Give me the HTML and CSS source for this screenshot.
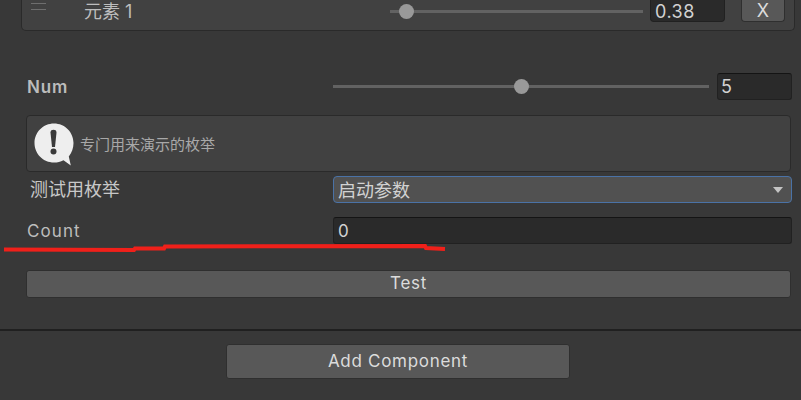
FILE: index.html
```html
<!DOCTYPE html>
<html lang="en">
<head>
    <meta charset="UTF-8">
    <title>Inspector</title>
    <link rel="stylesheet" href="styles.css">
</head>
<body>
<div class="inspector">
    <div class="list-card">
        <div class="handle"></div>
        <div class="item-name">元素 1</div>
        <div class="slider item-slider"><span class="thumb" style="left:16px"></span></div>
        <div class="field item-value">0.38</div>
        <div class="btn remove">X</div>
    </div>

    <div class="row num-row">
        <div class="label bold">Num</div>
        <div class="value-cell">
            <div class="slider"><span class="thumb" style="left:188px"></span></div>
            <div class="field num-value">5</div>
        </div>
    </div>

    <div class="helpbox">
        <svg class="help-icon" width="40" height="44" viewBox="0 0 40 44">
            <path d="M20 0.5C9.2 0.5 0.5 9.2 0.5 20C0.5 30.800 9.200 39.500 20 39.500C23.500 39.500 26.500 38.700 29.500 37.200L36.800 42.500L34.800 33.500C37.800 29.800 39.500 25.200 39.500 20C39.500 9.200 30.800 0.500 20 0.500Z" fill="#eeeeee"/>
            <path d="M16.500 9.500C16.500 7.500 17.800 6.800 19.500 6.800C21.200 6.800 22.500 7.500 22.500 9.500L21 24H18Z" fill="#3a3a3a"/>
            <circle cx="19.500" cy="28.500" r="3" fill="#3a3a3a"/>
        </svg>
        <span class="help-text">专门用来演示的枚举</span>
    </div>

    <div class="row enum-row">
        <div class="label cjk">测试用枚举</div>
        <div class="dropdown">
            <span class="dropdown-text">启动参数</span>
            <span class="arrow"></span>
        </div>
    </div>

    <div class="row count-row">
        <div class="label">Count</div>
        <div class="field count-value">0</div>
    </div>

    <div class="btn test-btn">Test</div>

    <div class="divider"></div>

    <div class="add-wrap">
        <div class="btn add-btn">Add Component</div>
    </div>

    <!-- red pen mark drawn on the screenshot -->
    <svg class="pen-mark" width="801" height="400" viewBox="0 0 801 400">
        <path d="M4 249.500L134 250L135 248.500L164 248.500L165 246.500L425 246L426 248L445 249" fill="none" stroke="#f0201a" stroke-width="4"/>
    </svg>
</div>
</body>
</html>
```

FILE: styles.css
```css
*{
    margin:0;
    padding:0;
    box-sizing: border-box;
}
html,body{
    width: 801px;
    height: 400px;
    overflow: hidden;
    background-color: #383838;
}
.inspector{
    position: relative;
    width: 801px;
    height: 400px;
    font-family: Inter, "Noto Sans CJK SC", sans-serif;
    font-size: 16px;
    color: #c4c4c4;
}

/* list element */
.list-card{
    display: flex;
    align-items: flex-start;
    width: 774px;
    height: 31px;
    margin-left: 21px;
    background-color: #414141;
    border: solid 1px #2a2a2a;
    border-top: none;
    border-radius: 0 0 5px 5px;
}
.handle{
    width: 15px;
    height: 7px;
    margin: 3px 0 0 9px;
    border-top: solid 1px #6e6e6e;
    border-bottom: solid 1px #6e6e6e;
}
.item-name{
    width: 306px;
    margin-left: 38px;
    line-height: 23px;
    font-size: 18px;
    color: #bdbdbd;
}
.slider{
    position: relative;
    height: 3px;
    background-color: #626262;
}
.thumb{
    position: absolute;
    top: -6px;
    width: 15px;
    height: 15px;
    margin-left: -7px;
    border-radius: 100%;
    background-color: #999;
}
.item-slider{
    width: 253px;
    margin-top: 10px;
}
.field{
    height: 27px;
    padding-left: 4px;
    background-color: #2a2a2a;
    border: solid 1px #212121;
    border-top-color: #141414;
    border-radius: 3px;
    line-height: 26px;
    color: #d2d2d2;
    letter-spacing: 0.5px;
}
.item-value{
    width: 75px;
    height: 22px;
    margin-left: 7px;
    line-height: 23px;
    font-size: 18px;
    border-top: none;
    border-radius: 0 0 4px 4px;
}
.btn{
    background-color: #585858;
    border: solid 1px #2f2f2f;
    border-radius: 3px;
    text-align: center;
    font-size: 17px;
    color: #dcdcdc;
    letter-spacing: 0.7px;
}
.remove{
    width: 44px;
    height: 22px;
    margin-left: 16px;
    border-top: none;
    border-radius: 0 0 4px 4px;
    line-height: 21px;
    font-size: 18px;
    letter-spacing: 0;
}

/* property rows */
.row{
    display: grid;
    grid-template-columns: 306px 459px;
    align-items: center;
    height: 27px;
    margin-left: 27px;
}
.num-row{
    margin-top: 42px;
}
.value-cell{
    display: flex;
    align-items: center;
    gap: 8px;
}
.value-cell .slider{
    width: 376px;
}
.num-value{
    width: 75px;
    padding-left: 3px;
    font-size: 18px;
}
.label{
    font-size: 17px;
    letter-spacing: 1.1px;
    color: #bdbdbd;
}
.bold{
    font-weight: 600;
    letter-spacing: 0.8px;
    color: #bcbcbc;
}
.cjk{
    padding: 0 0 3px 3px;
    font-size: 18px;
    letter-spacing: 0;
    color: #c8c8c8;
}
.helpbox{
    display: flex;
    align-items: center;
    width: 765px;
    height: 57px;
    margin: 15px 0 0 26px;
    padding: 0 0 1px 7px;
    background-color: #414141;
    border: solid 1px #2a2a2a;
    border-radius: 4px;
}
.help-icon{
    flex: none;
    margin-top: 3px;
}
.help-text{
    margin-left: 6px;
    font-size: 15px;
    color: #a8a8a8;
}
.enum-row{
    margin-top: 3px;
}
.dropdown{
    display: flex;
    align-items: center;
    justify-content: space-between;
    height: 27px;
    padding: 0 8px 0 4px;
    background-color: #515151;
    border: solid 1px #4a72a6;
    border-radius: 4px;
    font-size: 18px;
    color: #d2d2d2;
}
.dropdown-text{
    padding-bottom: 2px;
}
.arrow{
    width: 0;
    height: 0;
    border-left: solid 5.500px transparent;
    border-right: solid 5.500px transparent;
    border-top: solid 6px #c4c4c4;
}
.count-row{
    margin-top: 15px;
}
.count-value{
    font-size: 17px;
}
.test-btn{
    width: 765px;
    height: 28px;
    margin: 26px 0 0 26px;
    line-height: 25px;
}
.divider{
    height: 2px;
    margin-top: 31px;
    background-color: #202020;
}
.add-wrap{
    display: flex;
    justify-content: center;
    margin: 13px 5px 0 0;
}
.add-btn{
    width: 344px;
    height: 35px;
    line-height: 32px;
}
.pen-mark{
    position: absolute;
    left: 0;
    top: 0;
}
```
